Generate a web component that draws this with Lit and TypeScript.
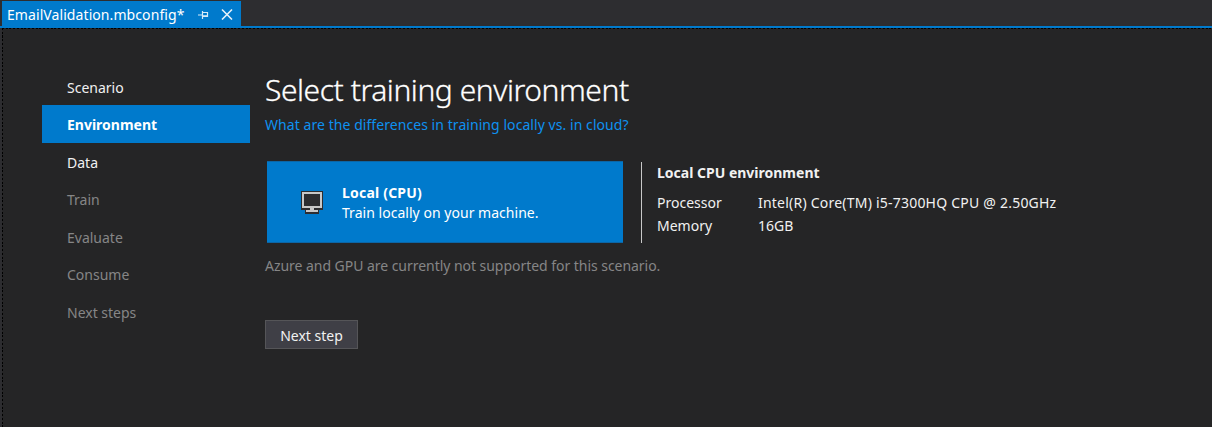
import { LitElement, html, css } from "lit";
import { customElement, state } from "lit/decorators.js";
import { classMap } from "lit/directives/class-map.js";

@customElement("app-root")
export class AppRoot extends LitElement {
  static styles = css`
    :host { display: block; }
    * { box-sizing: border-box; }
    .window { width: 1212px; height: 427px; overflow: hidden; background: #2d2d30; color: #f1f1f1;
      font: 14px/20px "Noto Sans", "Open Sans", sans-serif; display: flex; flex-direction: column; white-space: nowrap; }
    .tabs { height: 28px; flex: none; padding: 1px 0 0 2px; border-bottom: 2px solid #007acc; display: flex; }
    .tab { width: 239px; height: 25px; background: #007acc; display: flex; align-items: center; padding-left: 5px; color: #fff; }
    .tab-name { width: 190px; line-height: 25px; padding-top: 1px; }
    .pin { width: 12px; height: 12px; margin-right: 12px; }
    .close { width: 12px; height: 12px; }
    .tab svg { display: block; flex: none; }
    .page { flex: 1; margin-left: 2px; background:
      repeating-linear-gradient(90deg, #000 0 2px, #252526 2px 3.75px) 0 0 / 100% 1px no-repeat,
      repeating-linear-gradient(180deg, #000 0 2px, #252526 2px 3.75px) 0 0 / 1px 100% no-repeat, #252526;
      display: flex; padding: 40px 0 0 40px; }
    nav { width: 208px; margin-right: 15px; flex: none; padding-top: 0.5px; }
    .step { height: 37.5px; line-height: 37px; padding-left: 25px; }
    .active { background: #007acc; color: #fff; font-weight: 700; height: 38px; line-height: 39px; margin: -1px 0 0.5px; }
    .disabled { color: #868686; }
    main { flex: 1; }
    h1 { margin: 0; font-weight: 300; font-size: 30px; line-height: 44px; padding-bottom: 1px; color: #fff; -webkit-text-stroke: 0.3px #fff; }
    .link { color: #0e91f0; line-height: 24px; }
    .row { display: flex; margin-top: 24px; height: 82px; }
    .card { margin-left: 2px; width: 356px; height: 82px; background: #007acc; border-top: 1px solid #0d66a5; border-bottom: 1px solid #0d66a5;
      display: flex; align-items: center; padding-left: 33px; color: #fff; }
    .card svg { width: 24px; height: 24px; margin-right: 18px; }
    .card-text { padding-top: 2px; }
    .card-name { font-weight: 700; letter-spacing: 0.2px; }
    .details { margin: 1px 0 0 18px; border-left: 1px solid #c8c8c8; padding: 1px 0 0 15px; }
    .details-title { font-weight: 700; margin-bottom: 8px; }
    .spec { display: grid; grid-template-columns: 101px auto; line-height: 23px; }
    .note { color: #868686; margin-top: 13px; }
    .t-tab { letter-spacing: 0.08px; }
    .t-h1 { letter-spacing: -0.44px; }
    .t-link { letter-spacing: 0.06px; }
    .t-card { letter-spacing: 0.03px; }
    .t-cpu { letter-spacing: 0.22px; }
    .t-note { letter-spacing: -0.04px; }
    button { display: block; margin-top: 44px; width: 93px; height: 29px; border: 1px solid #555558; border-radius: 0; background: #3f3f46;
      color: #f1f1f1; font: inherit; padding: 2px 0 0; }
  `;

  @state() private steps = ["Scenario", "Environment", "Data", "Train", "Evaluate", "Consume", "Next steps"];

  render() {
    return html`<div class="window">
      <div class="tabs"><div class="tab">
        <span class="tab-name"><span class="t-tab">EmailValidation.mbconfig*</span></span>
        <svg class="pin" viewBox="0 0 12 12" fill="none" stroke="#d5eaf8"><path d="M1 7H5M5.5 3V11M5.5 4.5H10.5V9M5.5 8.5H11" stroke-width="1.2"/><path d="M5 8H11" stroke-width="1.6"/></svg>
        <svg class="close" viewBox="0 0 12 12" fill="none" stroke="#e5f1fa" stroke-width="1.6"><path d="M1 1.5L11 11.5M11 1.5L1 11.5"/></svg>
      </div></div>
      <div class="page">
        <nav>${this.steps.map((s, i) => html`<div class=${classMap({ step: true, active: i === 1, disabled: i > 2 })}><span>${s}</span></div>`)}</nav>
        <main>
          <h1><span class="t-h1">Select training environment</span></h1>
          <div class="link"><span class="t-link">What are the differences in training locally vs. in cloud?</span></div>
          <div class="row">
            <div class="card">
              <svg viewBox="0 0 24 24"><path fill="#2d2d30" d="M1 1H23V20H19V24H5V20H1Z"/><path fill="#c8c8c8" d="M2 2H22V18H14V20H18V22H6V20H10V18H2Z"/><path fill="#2d2d30" d="M4 4H20V16H4Z"/></svg>
              <div class="card-text"><div class="card-name"><span>Local (CPU)</span></div><div><span class="t-card">Train locally on your machine.</span></div></div>
            </div>
            <div class="details">
              <div class="details-title"><span class="t-det">Local CPU environment</span></div>
              <div class="spec"><span>Processor</span><span class="t-cpu">Intel(R) Core(TM) i5-7300HQ CPU @ 2.50GHz</span><span>Memory</span><span>16GB</span></div>
            </div>
          </div>
          <div class="note"><span class="t-note">Azure and GPU are currently not supported for this scenario.</span></div>
          <button>Next step</button>
        </main>
      </div>
    </div>`;
  }
}
